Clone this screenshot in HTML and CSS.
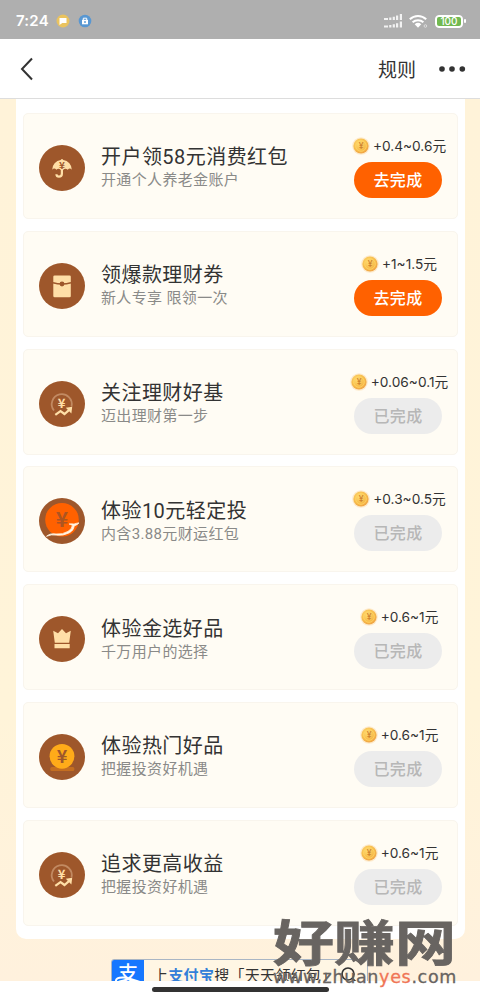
FILE: index.html
```html
<!DOCTYPE html>
<html lang="zh-CN">
<head>
<meta charset="utf-8">
<title>任务列表</title>
<link rel="stylesheet" href="styles.css">
</head>
<body>
<svg class="defs" width="0" height="0" aria-hidden="true">
  <defs>
    <radialGradient id="gold" cx=".4" cy=".35" r=".65"><stop offset="0" stop-color="#ffdb72"/><stop offset=".65" stop-color="#f7bd4c"/><stop offset="1" stop-color="#f0a544"/></radialGradient>
    <symbol id="coin" viewBox="0 0 18 18"><circle cx="9" cy="9" r="8.8" fill="#fdeacb"/><circle cx="9" cy="9" r="7.6" fill="url(#gold)"/><circle cx="9" cy="9" r="5.3" fill="none" stroke="#ffd766" stroke-width=".8"/><text x="9" y="12" text-anchor="middle" font-size="8.5" font-weight="500" fill="#cd812d">¥</text></symbol>
    <symbol id="trend" viewBox="0 0 46 46"><circle cx="23" cy="23" r="23" fill="#9e572b"/><path d="M15 29.5A10 10 0 1 1 32.5 25.5" fill="none" stroke="#c28a62" stroke-width="1.8"/><text x="22.5" y="27.4" text-anchor="middle" font-size="13" font-weight="700" fill="#ffdfa7">¥</text><path d="M16.3 33.8l5.2-3.8 4 3 5-4.4" fill="none" stroke="#ffdfa7" stroke-width="2.2"/><path d="M26.8 26.7l6.4-.9-.8 6.6z" fill="#ffdfa7"/></symbol>
  </defs>
</svg>
<div class="phone">
  <header class="status">
    <span class="time">7:24</span>
    <svg class="dot" viewBox="0 0 14 14"><circle cx="7" cy="7" r="6.5" fill="#eac35f"/><path d="M3.5 4h7v5H6.3l-2.8 2z" fill="#fff"/></svg>
    <svg class="dot" viewBox="0 0 14 14"><circle cx="7" cy="7" r="6.3" fill="#5897d2"/><path d="M4 5.8h6v4.5H4z" fill="#fff"/><path d="M5.3 6V4.2h3.4V6" fill="none" stroke="#fff"/><path d="M7 7v2" stroke="#5897d2" stroke-width="1.4"/></svg>
    <svg class="signal" viewBox="0 0 18 15"><g fill="#f2f2f2"><path d="M0 4h4v2H0zM5.2 3.4h2.2V6H5.2zM8.7 2.8h2.2V6H8.7zM12 1.6h2.2V6H12zM15.8 0H18v6h-2.2zM0 11.5h4v2H0zM5.2 11h2.2v2.5H5.2zM8.7 10.2h2.2v3.3H8.7zM12 9.2h2.2v4.3H12zM15.8 7.6H18v5.9h-2.2z"/></g></svg>
    <svg class="wifi" viewBox="0 0 19 15"><g fill="none" stroke="#fff" stroke-width="2"><path d="M.8 5.3a12 12 0 0 1 16.4 0M3.6 8.3a8 8 0 0 1 10.8 0"/></g><path d="M5.7 10.2a5 5 0 0 1 6.6 0L9 13.8z" fill="#fff"/><circle cx="16.4" cy="12" r="1.3" fill="none" stroke="#e5e5e5" stroke-width=".8"/></svg>
    <span class="battery"><span class="charge">100</span></span>
  </header>
  <nav class="navbar">
    <svg class="back" viewBox="0 0 14 24"><path d="M12 1.5L2 12l10 10.5" fill="none" stroke="#333" stroke-width="2"/></svg>
    <span class="rules">规则</span>
    <svg class="more" viewBox="0 0 28 8"><g fill="#333"><circle cx="4" cy="4" r="2.8"/><circle cx="14" cy="4" r="2.8"/><circle cx="24.3" cy="4" r="2.8"/></g></svg>
  </nav>
  <main class="page">
    <section class="panel">
      <article class="task">
        <svg class="icon" viewBox="0 0 46 46"><circle cx="23" cy="23" r="23" fill="#9e572b"/><path d="M13.2 24.7A9.8 9.8 0 0 1 21.7 15q1.3-2 2.6 0a9.8 9.8 0 0 1 8.5 9.7q-2-2.2-4.1 0-2.5-2-4.7.3v3.8q0 4-4 4-3.5 0-3.7-3.6h2.2q.2 1.4 1.6 1.4 1.7 0 1.7-2V25q-2.2-2.2-4.4-.3-2.2-2.2-4.2 0z" fill="#ffdfa7"/><text x="23" y="24.2" text-anchor="middle" font-size="10" font-weight="700" fill="#9e572b">¥</text></svg>
        <div class="info"><h2>开户领58元消费红包</h2><p>开通个人养老金账户</p></div>
        <div class="action"><div class="reward"><svg><use href="#coin"/></svg><span>+0.4~0.6元</span></div><button class="go">去完成</button></div>
      </article>
      <article class="task">
        <svg class="icon" viewBox="0 0 46 46"><circle cx="23" cy="23" r="23" fill="#9e572b"/><rect x="14.3" y="12.5" width="17.5" height="21.7" rx="1.3" fill="#ffdfa7"/><path d="M14 19.7q9 2.6 18 0" fill="none" stroke="#9e572b" stroke-width="1.6"/><circle cx="23" cy="21" r="2.4" fill="#9e572b"/></svg>
        <div class="info"><h2>领爆款理财券</h2><p>新人专享 限领一次</p></div>
        <div class="action"><div class="reward"><svg><use href="#coin"/></svg><span>+1~1.5元</span></div><button class="go">去完成</button></div>
      </article>
      <article class="task">
        <svg class="icon"><use href="#trend"/></svg>
        <div class="info"><h2>关注理财好基</h2><p>迈出理财第一步</p></div>
        <div class="action"><div class="reward"><svg><use href="#coin"/></svg><span>+0.06~0.1元</span></div><button class="done">已完成</button></div>
      </article>
      <article class="task">
        <svg class="icon" viewBox="0 0 46 46"><circle cx="23" cy="23" r="23" fill="#9e572b"/><circle cx="23" cy="21.8" r="16.8" fill="#ff6100"/><text x="23" y="29" text-anchor="middle" font-size="21" font-weight="700" fill="#ad5520">¥</text><path d="M7.5 38.3Q11 35 17 36q7 .5 12-2.6 4.2-2.5 4.4-6.2-2-.6-3.2-1.2 2.2-.3 4.8.1 2.5-1 5-1.2-1.7 2-4.8 3-.5 4.7-5.4 7.2-6 3-12.6 2-5-1-9.7 1.2z" fill="#fff5e5" stroke="#fff5e5" stroke-width=".8"/></svg>
        <div class="info"><h2>体验10元轻定投</h2><p>内含3.88元财运红包</p></div>
        <div class="action"><div class="reward"><svg><use href="#coin"/></svg><span>+0.3~0.5元</span></div><button class="done">已完成</button></div>
      </article>
      <article class="task">
        <svg class="icon" viewBox="0 0 46 46"><circle cx="23" cy="23" r="23" fill="#9e572b"/><path d="M15.8 26.8l-1.6-12 4.8 2.5 4-4.2 4 4.2 4.8-2.5-1.6 12zM15.5 28h15.2v4.3H15.5z" fill="#ffdfa7"/></svg>
        <div class="info"><h2>体验金选好品</h2><p>千万用户的选择</p></div>
        <div class="action"><div class="reward"><svg><use href="#coin"/></svg><span>+0.6~1元</span></div><button class="done">已完成</button></div>
      </article>
      <article class="task">
        <svg class="icon" viewBox="0 0 46 46"><circle cx="23" cy="23" r="23" fill="#9e572b"/><rect x="11.3" y="33" width="24" height="4" rx="1.5" fill="#c46e20"/><circle cx="23" cy="22.3" r="12.4" fill="#ffab19"/><text x="23" y="28.6" text-anchor="middle" font-size="18" font-weight="700" fill="#9e572b">¥</text></svg>
        <div class="info"><h2>体验热门好品</h2><p>把握投资好机遇</p></div>
        <div class="action"><div class="reward"><svg><use href="#coin"/></svg><span>+0.6~1元</span></div><button class="done">已完成</button></div>
      </article>
      <article class="task">
        <svg class="icon"><use href="#trend"/></svg>
        <div class="info"><h2>追求更高收益</h2><p>把握投资好机遇</p></div>
        <div class="action"><div class="reward"><svg><use href="#coin"/></svg><span>+0.6~1元</span></div><button class="done">已完成</button></div>
      </article>
    </section>
    <div class="search">
      <span class="logo">支<svg viewBox="0 0 32 22"><path d="M4 22q-1-5 8-4.5 7 1 16 4.5" fill="none" stroke="#fff" stroke-width="2"/></svg></span>
      <span class="query">上<b>支付宝</b>搜「天天领红包」</span>
      <svg class="lens" viewBox="0 0 20 20"><circle cx="9" cy="9" r="6" fill="none" stroke="#333" stroke-width="1.7"/><path d="M13 13l4 4" stroke="#333" stroke-width="1.7"/></svg>
    </div>
  </main>
  <footer class="home"><span></span></footer>
  <div class="watermark"><strong>好赚网</strong><span>www.zhuan<em>yes</em>.com</span></div>
</div>
</body>
</html>
```
FILE: styles.css
```css
* { box-sizing: border-box; }
body { margin: 0; font-family: "Noto Sans CJK SC", "Noto Sans", sans-serif; color: #333; }
.defs { position: absolute; }
.phone { position: relative; width: 480px; height: 1000px; display: flex; flex-direction: column; overflow: hidden; background: #fff; }
.status { height: 39px; flex: none; display: flex; align-items: center; padding: 3px 17px 0 16px; background: #afafaf; }
.time { font: 600 15px/20px Inter, sans-serif; color: #fff; width: 40px; letter-spacing: .2px; }
.dot { width: 14px; height: 14px; margin-right: 8px; }
.signal { width: 18px; height: 15px; margin-left: auto; margin-right: 7px; }
.wifi { width: 19px; height: 15px; margin-right: 7px; }
.battery { position: relative; width: 28px; height: 13px; padding: 1px; border: 1px solid #fff; border-radius: 4px; background: #fff; }
.battery::after { content: ""; position: absolute; right: -4px; top: 3px; width: 2px; height: 4px; background: #fff; border-radius: 1px; }
.charge { display: block; height: 9px; background: #72b951; border-radius: 2px; color: #fff; font: 500 10px/9px Inter, sans-serif; text-align: center; }
.navbar { height: 60px; flex: none; display: flex; align-items: center; padding: 0 14px 0 20px; border-bottom: 1px solid #ddd; }
.back { width: 14px; height: 24px; }
.rules { margin-left: auto; font-size: 19px; line-height: 28px; }
.more { width: 28px; height: 8px; margin-left: 22px; }
.page { height: 882px; flex: none; overflow: hidden; background: linear-gradient(#fff3d9 0, #fff4d9 70%, #fff1dd 100%); }
.panel { width: 449px; height: 840px; margin-left: 16px; padding: 14px 7px 0; display: flex; flex-direction: column; gap: 11.8px; background: #fff; border-radius: 0 0 10px 10px; }
.task { height: 106px; flex: none; display: flex; align-items: flex-start; padding-left: 15px; background: #fffcf4; border: 1px solid #f9f5ed; border-radius: 5px; }
.icon { width: 46px; height: 46px; margin-top: 31px; flex: none; }
.info { margin: 30.4px 0 0 16px; white-space: nowrap; }
.info h2 { margin: 0; font: 400 20px/26px Roboto, "Noto Sans CJK SC", sans-serif; letter-spacing: .45px; color: #333; }
.info p { margin: 0; font: 400 15px/20px Roboto, "Noto Sans CJK SC", sans-serif; letter-spacing: .35px; color: #8a8a88; }
.action { width: 118px; margin-left: auto; display: flex; flex-direction: column; align-items: center; padding-top: 21px; }
.reward { display: flex; align-items: center; height: 22px; gap: 3px; padding-left: 2px; font: 13.7px/22px Inter, "Noto Sans CJK SC", sans-serif; white-space: nowrap; }
.reward svg { width: 18px; height: 18px; }
.action button { width: 88px; height: 36px; margin: 5px 0 0; padding: 0 0 1px; border: 0; border-radius: 18px; font: 500 16px/35px "Noto Sans CJK SC", sans-serif; letter-spacing: .4px; }
.go { background: #ff6100; color: #fff; }
.done { background: #ececec; color: #b7b7b7; }
.search { width: 257px; height: 36px; margin: 20px 0 0 111px; display: flex; border: 1px solid #a9b5c4; border-radius: 3px; background: #fff6e4; }
.logo { position: relative; width: 32px; height: 35px; background: #1677ff; color: #fff; font-size: 20px; line-height: 26px; font-weight: 500; text-align: center; border-radius: 2px 0 0 0; }
.logo svg { position: absolute; left: 0; top: 0; width: 32px; height: 22px; }
.query { margin-left: 9px; font-size: 15px; line-height: 30px; font-weight: 400; white-space: nowrap; letter-spacing: .3px; }
.query b { color: #337fd9; font-weight: 700; }
.lens { width: 20px; height: 20px; margin: 5px 0 0 2px; }
.home { height: 19px; padding-top: 6px; }
.home span { display: block; width: 177px; height: 5px; margin: 0 auto; border-radius: 3px; background: #333; }
.watermark { position: absolute; left: 273px; top: 917px; width: 184px; height: 68px; color: #686461; }
.watermark strong { display: block; height: 52px; font-size: 61px; line-height: 50px; font-weight: 700; transform: translateY(-2px) scaleY(.8); white-space: nowrap; -webkit-text-stroke: 1px; }
.watermark span { display: block; font: 17.5px/16px "DejaVu Sans", sans-serif; letter-spacing: .67px; white-space: nowrap; -webkit-text-stroke: .3px; }
.watermark em { font-style: normal; color: #f07555; }
```
